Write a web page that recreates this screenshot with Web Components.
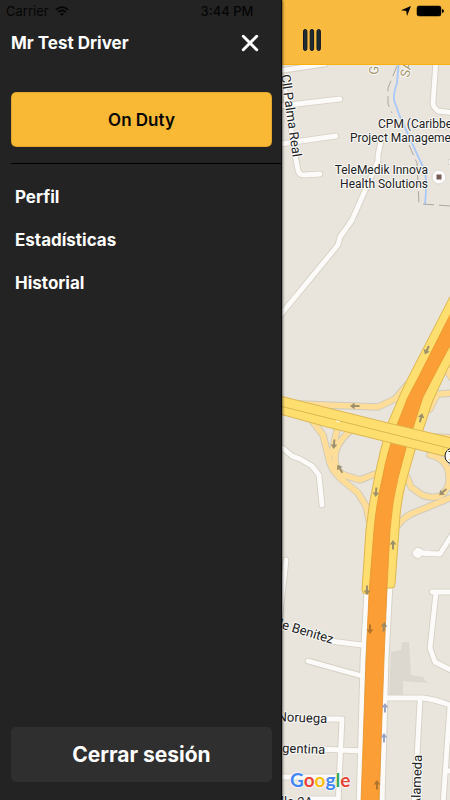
<!DOCTYPE html>
<html lang="es">
<head>
<meta charset="utf-8">
<meta name="viewport" content="width=device-width, initial-scale=1">
<title>Driver</title>
<style>
html, body { height: 100%; }
body { margin: 0; font-family: Inter, "Liberation Sans", sans-serif; background: #232323; }
</style>
</head>
<body>
<driver-app></driver-app>

<template id="t-app">
  <style>
    :host { display: grid; grid-template-columns: 282px minmax(0, 1fr); min-height: 100%; position: relative; --yellow: #f9b934; }
    status-bar { position: absolute; inset: 0 0 auto 0; }
    main { display: flex; flex-direction: column; min-width: 0; }
    city-map { flex: 1; }
  </style>
  <side-drawer>
    <span slot="name">Mr Test Driver</span>
    <span slot="duty">On Duty</span>
    <menu-link>Perfil</menu-link>
    <menu-link>Estadísticas</menu-link>
    <menu-link>Historial</menu-link>
    <span slot="logout">Cerrar sesión</span>
  </side-drawer>
  <main>
    <top-bar></top-bar>
    <city-map></city-map>
  </main>
  <status-bar></status-bar>
</template>

<template id="t-status">
  <style>
    :host { display: grid; grid-template-columns: 1fr auto 1fr; align-items: center; height: 22px; padding: 0 6px; font-size: 13px; color: #050505; pointer-events: none; z-index: 2; }
    div { display: flex; align-items: center; gap: 6px; }
    .right { justify-content: flex-end; gap: 5px; }
    b { font-weight: 500; padding-left: 4px; }
    svg { display: block; }
  </style>
  <div><span>Carrier</span>
    <svg width="14" height="10" viewBox="0 0 14 10" fill="none" stroke="currentColor" stroke-width="1.8" aria-hidden="true"><path d="M1 3.8Q7-1.6 13 3.8M3.2 6.2Q7 2.8 10.800 6.200"/><path d="M5 8Q7 6 9 8L7 10Z" fill="currentColor" stroke="none"/></svg>
  </div>
  <b>3:44 PM</b>
  <div class="right">
    <svg width="10" height="10" viewBox="0 0 10 10" aria-hidden="true"><path d="M10 0L6 10L5.200 5L0 4.300Z"/></svg>
    <svg width="28" height="12" viewBox="0 0 28 12" aria-hidden="true"><rect x="1" y="1" width="24" height="10" rx="2" stroke="#000" stroke-opacity=".5"/><path d="M26 4Q28 4.500 28 6T26 8Z"/></svg>
  </div>
</template>

<template id="t-drawer">
  <style>
    :host { display: flex; flex-direction: column; box-sizing: border-box; padding: 28px 9px 18px 11px; background: #232323; color: #fff; box-shadow: 0 0 3px #000; border-right: 1px solid #0c0c0c; z-index: 1; }
    header { display: flex; justify-content: space-between; align-items: center; height: 30px; padding-right: 12px; }
    h1 { margin: 0; font-size: 17px; line-height: 24px; font-weight: 700; }
    button { font: inherit; border: 0; border-radius: 5px; cursor: pointer; padding: 0; }
    .close { display: grid; place-items: center; width: 20px; height: 30px; color: #fff; background: none; }
    .duty { margin-top: 34px; height: 55px; color: #050505; background: var(--yellow); font-size: 17px; font-weight: 600; box-shadow: 0 0 1px #000 inset; }
    hr { margin: 16px -9px 0 0; border: 0; border-top: 1px solid #000; width: auto; align-self: stretch; }
    nav { display: flex; flex-direction: column; padding: 11px 4px; }
    .logout { margin-top: auto; height: 55px; color: #fff; background: #2f2f2f; font-size: 21px; font-weight: 700; }
  </style>
  <header>
    <h1><slot name="name"></slot></h1>
    <button class="close" aria-label="Cerrar menú"><svg width="18" height="18" viewBox="0 0 18 18" stroke="currentColor" stroke-width="3" stroke-linecap="round" aria-hidden="true"><path d="M2.300 2.300L15.700 15.700M15.700 2.300L2.300 15.700"/></svg></button>
  </header>
  <button class="duty"><slot name="duty"></slot></button>
  <hr>
  <nav><slot></slot></nav>
  <button class="logout"><slot name="logout"></slot></button>
</template>

<template id="t-link">
  <style>
    :host { display: block; }
    a { display: flex; align-items: center; height: 43px; color: #fff; font-size: 17px; font-weight: 700; text-decoration: none; }
  </style>
  <a href="#"><slot></slot></a>
</template>

<template id="t-top">
  <style>
    :host { display: flex; align-items: flex-end; box-sizing: border-box; height: 65px; padding: 0 20px 10px; background: #f9ba40; border-bottom: 1px solid #f9b112; }
    button { display: grid; place-items: center; width: 20px; height: 28px; padding: 0; border: 0; background: none; cursor: pointer; }
  </style>
  <button aria-label="Menú"><svg width="18" height="22" viewBox="0 0 18 22" fill="#202c33" stroke="#101626" aria-hidden="true"><rect x=".5" y=".5" width="3.400" height="21" rx="1.700"/><rect x="7.200" y=".5" width="3.400" height="21" rx="1.700"/><rect x="14" y=".5" width="3.400" height="21" rx="1.700"/></svg></button>
</template>

<template id="t-map">
  <style>
    :host { display: block; position: relative; overflow: hidden; min-height: 735px; background: #e9e5dc; }
    svg { position: absolute; inset: 0; width: 100%; height: 100%; font-family: Roboto, "Liberation Sans", sans-serif; }
    .line { fill: none; stroke-linecap: round; stroke-linejoin: round; }
    .label { font-size: 12px; fill: #222; stroke: #fff; stroke-opacity: .8; stroke-width: 2px; paint-order: stroke; stroke-linejoin: round; }
    .street { font-size: 13px; }
    .tan { fill: #a3966c; }
    .logo { font: 700 19px Lato, sans-serif; text-shadow: 0 0 2px #fff, 0 0 2px #fff, 0 0 1px #fff; }
  </style>
  <svg viewBox="282 65 168 735" preserveAspectRatio="xMinYMin slice" role="img" aria-label="Mapa">
    <defs>
      <g id="streets">
        <path d="M278 71L325 64M280 106L340 99M280 144L336 136M284 84L295 155L298 170Q299 175 304 175L320 174"/>
        <path d="M381 141L378 155L378 161L352 220L340 237L338 245L278 318"/>
        <path d="M436 60L433 103Q433 107 438 111L455 113M451 162H460"/>
        <path d="M278 445L285 450L292 456L300 459L312 466L319 475L322 505"/>
        <path d="M286 560L280 615M330 641L362 645M308 661L362 676M367 590L363 660L359 805M390 585L386 660L382 805"/>
        <path d="M417 553L440 554L455 530M432 592H460M436 593L430 648L435 662L455 672"/>
        <path d="M387 698L423 698Q438 700 455 707M420 700L417 757L414 805M450 706L447 747L443 805M446 771H460"/>
        <path d="M325 719H342L338 805M320 749L362 751M278 777L338 777M310 799H338"/>
      </g>
      <g id="ramps">
        <path d="M300 404L378 407L395 399L407 385M313 422L323 435L330 463Q332 470 340 478L358 493L366 506L369 520"/>
        <path d="M338 425L332 453M350 431Q334 445 335 460Q336 471 344 475L360 480L375 474"/>
        <path d="M455 393L438 394Q434 399 430 409M449 360V374L455 382M430 455Q449 459 449 478Q450 489 440 496Q432 499 422 495L411 487L407 477M436 437L455 438"/>
        <path d="M398 525Q402 519 411 514L450 498"/>
      </g>
      <path id="arrow" d="M-1 4.500V-.5H-3.300L0-5L3.300-.5H1V4.500Z"/>
    </defs>

    <path d="M402 642L409 642L411 675L423 677L427 683L403 681V695L389 695L391 652L401 650Z" fill="#dcd8d0"/>
    <path d="M399 60L397 83Q392 98 395 103L400 117L423 167Q427 176 426 190L425 205" fill="none" stroke="#a9c8fa" stroke-width="1.800"/>
    <path d="M397 66L388 88V104L392 113M409 145L417 163L419 204M423 204L450 206" fill="none" stroke="#aaa7a1" stroke-dasharray="11 5"/>

    <use href="#streets" class="line" stroke="#d5d0c4" stroke-width="6.600"/>
    <use href="#streets" class="line" stroke="#fcfbf9" stroke-width="4.800"/>
    <path d="M412 552L417 547L423 549L424 555L418 559L413 556Z" fill="#fcfbf9" stroke="#d9d4ca"/>
    <path d="M420 553H430" stroke="#fcfbf9" stroke-width="4.800"/>
    <use href="#ramps" class="line" stroke="#cfcabd" stroke-width="7.400"/>
    <use href="#ramps" class="line" stroke="#fddd98" stroke-width="5.600"/>

    <path d="M452 293L407 380L400 395L388 423Q380 450 375 475Q369 502 366 530L362 590Q362 594 366 594H369L387 588H392Q395 588 395 584L399 530Q400 502 407 478L415 450L423 430L433 400L447 370L455 355Z" fill="#ffde70" stroke="#deb750"/>
    <path d="M452 311L417 380L408 397L397 425Q387 453 383 475Q376 505 374 530L369 593L366 660L361 802H379L384 660L387 587L390 530Q392 502 398 478L406 448L413 428L423 397L437 370L453 340Z" fill="#fa9e35" stroke="#e8952f" stroke-width=".8"/>
    <path d="M280 396L388 423L452 438V458L327 427L280 414Z" fill="#ffde70" stroke="#deb750"/>
    <path d="M280 406L452 449" stroke="#deb750"/>
    <path d="M336 421L340 422" stroke="#fff"/>

    <g fill="#92876a" fill-opacity=".9">
      <use href="#arrow" transform="translate(427 350) rotate(205)"/>
      <use href="#arrow" transform="translate(355 406) rotate(-90)"/>
      <use href="#arrow" transform="translate(421 418) rotate(15)"/>
      <use href="#arrow" transform="translate(334 444) rotate(185)"/>
      <use href="#arrow" transform="translate(340 469) rotate(-32)"/>
      <use href="#arrow" transform="translate(376 492) rotate(185)"/>
      <use href="#arrow" transform="translate(443 492) rotate(230)"/>
      <use href="#arrow" transform="translate(393 545)"/>
      <use href="#arrow" transform="translate(367 590) rotate(180)"/>
      <use href="#arrow" transform="translate(370 629) rotate(180)" fill="#a86f2c"/>
      <use href="#arrow" transform="translate(384 627) rotate(5)"/>
      <use href="#arrow" transform="translate(377 785)" fill="#a86f2c"/>
    </g>
    <g fill="#9ca4c4">
      <use href="#arrow" transform="translate(385 708)"/>
      <use href="#arrow" transform="translate(384 738)"/>
    </g>

    <circle cx="439" cy="177" r="7" fill="#fff" stroke="#dad6ce"/>
    <rect x="436.500" y="174.500" width="5" height="5" fill="#795b55"/>
    <circle cx="453" cy="456" r="8" fill="#fff" stroke="#222"/>
    <text class="label" x="448" y="460">7</text>

    <text class="label" x="378" y="128">CPM (Caribbe</text>
    <text class="label" x="350" y="142">Project Manageme</text>
    <text class="label" x="428" y="174" text-anchor="end">TeleMedik Innova</text>
    <text class="label" x="428" y="188" text-anchor="end">Health Solutions</text>
    <text class="label street" transform="translate(281 75) rotate(82)">Cll Palma Real</text>
    <text class="label street tan" transform="translate(378 75) rotate(-85)">G</text>
    <text class="label street tan" transform="translate(409 78) rotate(-78)">SA</text>
    <text class="label street" transform="translate(332 644) rotate(17)" text-anchor="end">de Benitez</text>
    <text class="label street" transform="translate(327 723) rotate(2)" text-anchor="end">Noruega</text>
    <text class="label street" transform="translate(325 754) rotate(2)" text-anchor="end">gentina</text>
    <text class="label street" transform="translate(313 806)" text-anchor="end">lle 2A</text>
    <text class="label street" transform="translate(422 755) rotate(-88)" text-anchor="end">Alameda</text>
    <text class="logo" x="290" y="787"><tspan fill="#4285f4">G</tspan><tspan fill="#ea4335">o</tspan><tspan fill="#fbbc05">o</tspan><tspan fill="#4285f4">g</tspan><tspan fill="#34a853">l</tspan><tspan fill="#ea4335">e</tspan></text>
  </svg>
</template>

<script>
const define = (name, id) => customElements.define(name, class extends HTMLElement {
  constructor() {
    super();
    this.attachShadow({ mode: "open" }).append(document.getElementById(id).content.cloneNode(true));
  }
});
define("menu-link", "t-link");
define("status-bar", "t-status");
define("side-drawer", "t-drawer");
define("top-bar", "t-top");
define("city-map", "t-map");
define("driver-app", "t-app");
</script>
</body>
</html>
